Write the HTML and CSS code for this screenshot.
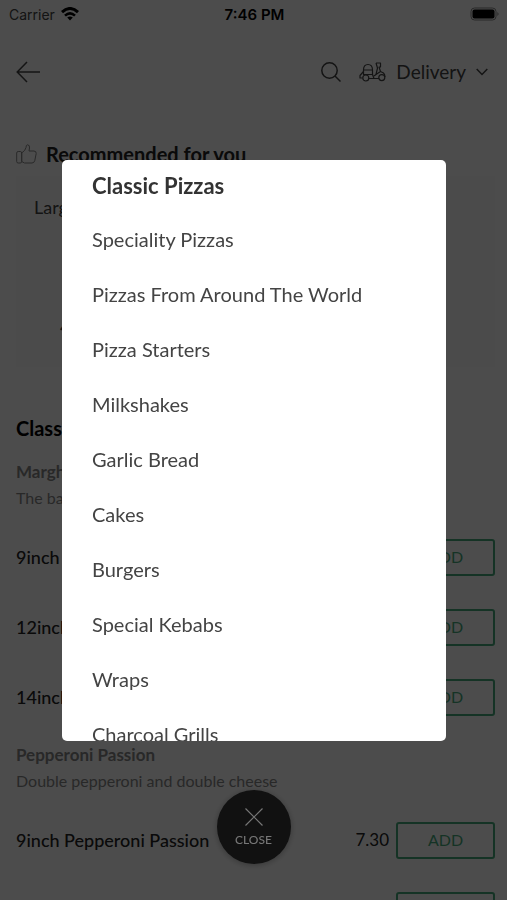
FILE: index.html
```html
<!DOCTYPE html>
<html lang="en">

<head>
  <meta charset="UTF-8" />
  <meta name="viewport" content="width=device-width, initial-scale=1.0" />
  <title>Menu</title>
  <link rel="stylesheet" href="styles.css">
</head>

<body>
  <div class="status-bar">
    <div class="carrier">
      <span>Carrier</span>
      <svg width="18" height="14" viewBox="0 0 18 14" fill="none" stroke="#000" stroke-width="3">
        <path d="M1 5.2Q9-2.2 17 5.2" />
        <path d="M4 8.6Q9 4 14 8.6" stroke-width="2.6" />
        <path d="M6.2 10.6Q9 8.4 11.8 10.6L9 13.6Z" fill="#000" stroke="none" />
      </svg>
    </div>
    <span class="time">7:46 PM</span>
    <div class="battery">
      <svg width="30" height="14" viewBox="0 0 30 14">
        <rect x="1" y="1" width="25" height="12" rx="3.5" fill="none" stroke="#888" />
        <rect x="2.5" y="2.5" width="22" height="9" rx="2" fill="#000" />
        <path d="M27.5 5Q29.5 7 27.5 9Z" fill="#777" />
      </svg>
    </div>
  </div>

  <header class="header">
    <button class="icon-button" type="button" aria-label="Back">
      <svg width="24" height="22" viewBox="0 0 24 22" fill="none" stroke="currentColor" stroke-width="1.5">
        <path d="M24 11H1.5M11 1L1.2 11L11 21" />
      </svg>
    </button>
    <div class="header-right">
      <button class="icon-button" type="button" aria-label="Search">
        <svg width="20" height="20" viewBox="0 0 20 20" fill="none" stroke="currentColor" stroke-width="1.5">
          <circle cx="8.5" cy="8.5" r="7.7" />
          <path d="M14 14L19.5 19.5" />
        </svg>
      </button>
      <button class="delivery" type="button">
        <svg width="27" height="20" viewBox="0 0 27 20" fill="none" stroke="currentColor" stroke-width="1.2" stroke-linejoin="round">
          <path d="M4.5 8Q4.5 2.5 9 2.5T13.5 8ZM4 8H14M4.5 8V12.5H13.5V8" />
          <path d="M3.5 16H1V13.5L4.5 9.5M13.5 12.5L15 16.5M10 16.5H20M17 1H21.5V5H20L21.5 9.5L24.5 11Q26 12.5 26 15M17 1L18.5 6L17 12.5L15 14M17 12.5L21.5 9.5" />
          <circle cx="6.8" cy="16" r="3" />
          <circle cx="22.8" cy="15.6" r="3" />
        </svg>
        <span>Delivery</span>
        <svg class="chevron" width="12" height="8" viewBox="0 0 12 8" fill="none" stroke="currentColor" stroke-width="1.5">
          <path d="M0.7 1L6 6.5L11.3 1" />
        </svg>
      </button>
    </div>
  </header>

  <main class="menu">
    <h2 class="recommended">
      <svg width="21" height="20" viewBox="0 0 21 20" fill="none" stroke="#888" stroke-linejoin="round">
        <rect x="0.7" y="7.5" width="5" height="11.5" rx="1.5" />
        <path d="M5.7 9Q9.5 6.5 10 3.5Q10 0.8 11.5 0.8Q14 1 13.5 4L13 7H18Q20.5 7.3 20.2 9.5L18.8 16.5Q18.2 19 16 19H8.5L5.7 17.5Z" />
      </svg>
      Recommended for you
    </h2>
    <div class="card">
      <p>Large Pizza</p>
      <p class="card-price">4.30</p>
    </div>

    <h2 class="category">Classic Pizzas</h2>

    <section class="item">
      <h3>Margherita</h3>
      <p>The basic cheese and tomato</p>
      <div class="row"><span>9inch Margherita</span><span class="price">6.30</span><button class="add" type="button">ADD</button></div>
      <div class="row"><span>12inch Margherita</span><span class="price">8.30</span><button class="add" type="button">ADD</button></div>
      <div class="row"><span>14inch Margherita</span><span class="price">9.30</span><button class="add" type="button">ADD</button></div>
    </section>

    <section class="item">
      <h3>Pepperoni Passion</h3>
      <p>Double pepperoni and double cheese</p>
      <div class="row"><span>9inch Pepperoni Passion</span><span class="price">7.30</span><button class="add" type="button">ADD</button></div>
      <div class="row"><span>12inch Pepperoni Passion</span><span class="price">9.30</span><button class="add" type="button">ADD</button></div>
    </section>
  </main>

  <div class="overlay">
    <nav class="modal" aria-label="Menu categories">
      <a class="active" href="#">Classic Pizzas</a>
      <a href="#">Speciality Pizzas</a>
      <a href="#">Pizzas From Around The World</a>
      <a href="#">Pizza Starters</a>
      <a href="#">Milkshakes</a>
      <a href="#">Garlic Bread</a>
      <a href="#">Cakes</a>
      <a href="#">Burgers</a>
      <a href="#">Special Kebabs</a>
      <a href="#">Wraps</a>
      <a href="#">Charcoal Grills</a>
    </nav>
    <button class="close" type="button">
      <svg width="18" height="18" viewBox="0 0 18 18" fill="none" stroke="currentColor" stroke-width="1.2">
        <path d="M0.5 0.5L17.5 17.5M17.5 0.5L0.5 17.5" />
      </svg>
      CLOSE
    </button>
  </div>
</body>

</html>
```

FILE: styles.css
```css
* {
  box-sizing: border-box;
}

body {
  margin: 0;
  height: 100vh;
  overflow: hidden;
  background: #fff;
  color: #444;
  font-family: Lato, "Open Sans", sans-serif;
  font-size: 18px;
}

h2,
h3,
p {
  margin: 0;
}

button {
  padding: 0;
  border: none;
  background: none;
  color: inherit;
  font: inherit;
  cursor: pointer;
}

svg {
  display: block;
  flex: none;
}

.status-bar {
  display: grid;
  grid-template-columns: 1fr auto 1fr;
  align-items: center;
  height: 28px;
  padding: 0 7px 0 9px;
  font-family: Inter, Roboto, sans-serif;
  font-size: 14px;
}

.carrier {
  display: flex;
  align-items: center;
  gap: 6px;
}

.time {
  color: #000;
  font-size: 15px;
  font-weight: 600;
}

.battery {
  justify-self: end;
}

.header {
  display: flex;
  align-items: center;
  justify-content: space-between;
  height: 88px;
  padding: 0 19px 0 16px;
}

.header-right,
.delivery {
  display: flex;
  align-items: center;
}

.header-right {
  gap: 18px;
}

.delivery {
  gap: 10px;
  font-size: 19px;
  line-height: 24px;
}

.menu {
  padding: 24px 12px 0 16px;
}

.recommended {
  display: flex;
  align-items: center;
  gap: 9px;
  color: #222;
  font-size: 20px;
  line-height: 28px;
}

.card {
  height: 191px;
  margin-top: 8px;
  padding: 19px 18px;
  background: #fcfcfc;
  line-height: 24px;
}

.card-price {
  margin-top: 96px;
  padding-left: 26px;
}

.category {
  margin: 47px 0 17px;
  color: #000;
  font-size: 20px;
  line-height: 28px;
}

.item {
  padding-bottom: 10px;
  color: #888;
  font-size: 16px;
  line-height: 26px;
}

.item h3 {
  font-size: 17px;
}

.item p {
  margin-bottom: 11px;
}

.row {
  display: flex;
  align-items: center;
  height: 70px;
  color: #222;
  font-size: 18px;
  font-weight: 500;
}

.price {
  margin-left: auto;
  font-size: 17px;
  font-weight: 400;
}

.add {
  width: 99px;
  height: 37px;
  margin-left: 7px;
  border: 2px solid #48ac7c;
  border-radius: 3px;
  color: #48ac7c;
  font-size: 16px;
  font-weight: 400;
}

.overlay {
  position: fixed;
  inset: 0;
  padding: 160px 61px 159px 62px;
  background: rgba(0, 0, 0, 0.7);
}

.modal {
  height: 100%;
  overflow: hidden;
  background: #fff;
  border-radius: 5px;
}

.modal a {
  display: block;
  padding-left: 30px;
  color: #444;
  font-size: 20px;
  line-height: 55px;
  text-decoration: none;
}

.modal .active {
  color: #333;
  font-size: 22px;
  font-weight: bold;
  line-height: 52px;
}

/* floats over the menu, centred at the bottom */
.close {
  position: absolute;
  bottom: 36px;
  left: 50%;
  display: flex;
  flex-direction: column;
  align-items: center;
  justify-content: center;
  gap: 7px;
  width: 74px;
  height: 74px;
  border-radius: 50%;
  background: #111;
  box-shadow: 0 1px 6px rgba(0, 0, 0, 0.3);
  color: #777;
  font-size: 12px;
  font-weight: 500;
  line-height: 14px;
  transform: translateX(-50%);
}
```
